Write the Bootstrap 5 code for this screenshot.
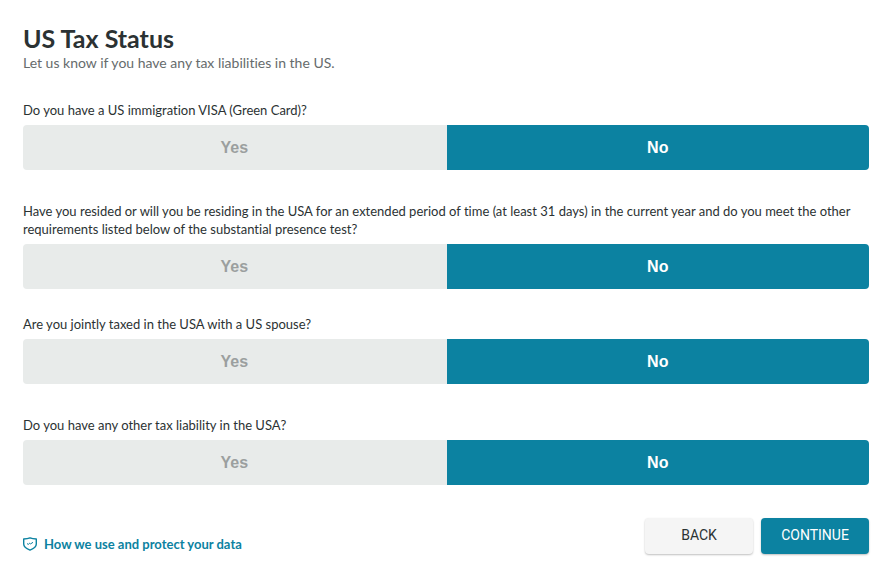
<!DOCTYPE html>
<html lang="en">
<head>
<meta charset="utf-8">
<meta name="viewport" content="width=device-width, initial-scale=1">
<title>US Tax Status</title>
<link href="https://cdn.jsdelivr.net/npm/bootstrap@5.3.0/dist/css/bootstrap.min.css" rel="stylesheet">
<style>
  :root { --brand: #0c82a1; --ink: #2b3233; --soft: #e8ebea; }
  body { font-family: Lato, "Open Sans", sans-serif; color: var(--ink); font-size: 14px; line-height: 18px; font-variant-ligatures: none; }
  .page { padding: 23px 22px 20px 23px; }
  .page-title { font-size: 25px; line-height: 31px; font-weight: 700; }
  .page-intro { font-size: 14px; line-height: 18px; color: #666b6c; margin-bottom: 29px; }
  .question { margin-bottom: 32px; }
  .question-long { margin-bottom: 26px; }
  .question legend { font-size: 13px; line-height: 18px; margin-bottom: 6px; }
  .choice .btn { --bs-btn-color: #9b9f9f; --bs-btn-bg: var(--soft); --bs-btn-hover-color: #6f7474; --bs-btn-hover-bg: #dfe2e1;
    --bs-btn-active-color: #fff; --bs-btn-active-bg: var(--brand); --bs-btn-border-radius: 4px;
    flex: 1 1 0; box-sizing: content-box; border: 0; padding: 12px; font: 700 16px/21px "Liberation Sans", Arial, sans-serif; }
  .choice > .btn:first-of-type { border-right: 1px solid #d5d9d9; padding-right: 13px; }
  .choice.btn-group > .btn { margin-left: 0; }
  .privacy { color: var(--brand); font-size: 13px; font-weight: 700; }
  .privacy svg { margin-right: 7px; }
  .action { --bs-btn-border-radius: 4px; width: 108px; padding: 8px 0 10px; border: 0; font: 400 14px/18px Roboto, Arial, sans-serif;
    box-shadow: 0 1px 2px rgba(0, 0, 0, .25); }
  .action-back { --bs-btn-bg: #f5f5f5; --bs-btn-color: var(--ink); --bs-btn-hover-bg: #e9e9e9; }
  .action-next { --bs-btn-bg: var(--brand); --bs-btn-color: #fff; --bs-btn-hover-bg: #0a6f8a; --bs-btn-hover-color: #fff; }
  .footer-bar { padding-top: 1px; }
  .privacy { padding-bottom: 1px; }
</style>
</head>
<body class="bg-white">
<main>
<form class="page">
  <h1 class="page-title mb-0">US Tax Status</h1>
  <p class="page-intro">Let us know if you have any tax liabilities in the US.</p>

  <fieldset class="question">
    <legend>Do you have a US immigration VISA (Green Card)?</legend>
    <div class="choice btn-group d-flex">
      <input type="radio" class="btn-check" name="visa" id="visa-yes"><label class="btn" for="visa-yes">Yes</label>
      <input type="radio" class="btn-check" name="visa" id="visa-no" checked><label class="btn" for="visa-no">No</label>
    </div>
  </fieldset>

  <fieldset class="question question-long">
    <legend>Have you resided or will you be residing in the USA for an extended period of time (at least 31 days) in the current year and do you meet the other requirements listed below of the substantial presence test?</legend>
    <div class="choice btn-group d-flex">
      <input type="radio" class="btn-check" name="resided" id="resided-yes"><label class="btn" for="resided-yes">Yes</label>
      <input type="radio" class="btn-check" name="resided" id="resided-no" checked><label class="btn" for="resided-no">No</label>
    </div>
  </fieldset>

  <fieldset class="question">
    <legend>Are you jointly taxed in the USA with a US spouse?</legend>
    <div class="choice btn-group d-flex">
      <input type="radio" class="btn-check" name="spouse" id="spouse-yes"><label class="btn" for="spouse-yes">Yes</label>
      <input type="radio" class="btn-check" name="spouse" id="spouse-no" checked><label class="btn" for="spouse-no">No</label>
    </div>
  </fieldset>

  <fieldset class="question">
    <legend>Do you have any other tax liability in the USA?</legend>
    <div class="choice btn-group d-flex">
      <input type="radio" class="btn-check" name="liability" id="liability-yes"><label class="btn" for="liability-yes">Yes</label>
      <input type="radio" class="btn-check" name="liability" id="liability-no" checked><label class="btn" for="liability-no">No</label>
    </div>
  </fieldset>

  <div class="footer-bar d-flex flex-wrap justify-content-between align-items-end gap-2">
    <a class="privacy d-inline-flex align-items-center text-decoration-none" href="#">
      <svg width="14" height="14" viewBox="0 0 14 14" fill="none" stroke="currentColor" aria-hidden="true">
        <path d="M.7 2Q4.500 1.900 7 .9Q9.500 1.900 13.300 2V7C13.300 9.900 11 11.500 7 13.100C3 11.500 .7 9.900 .7 7Z" stroke-width="1.400" stroke-linejoin="round"/>
        <path d="M4 6.600L5.500 7.400L6.700 6.100L7.600 6.900L10 5.300" stroke-width="1"/>
      </svg>
      How we use and protect your data
    </a>
    <div class="d-flex gap-2">
      <button type="button" class="btn action action-back">BACK</button>
      <button type="submit" class="btn action action-next">CONTINUE</button>
    </div>
  </div>
</form>
</main>
<script src="https://cdn.jsdelivr.net/npm/bootstrap@5.3.0/dist/js/bootstrap.bundle.min.js"></script>
</body>
</html>
